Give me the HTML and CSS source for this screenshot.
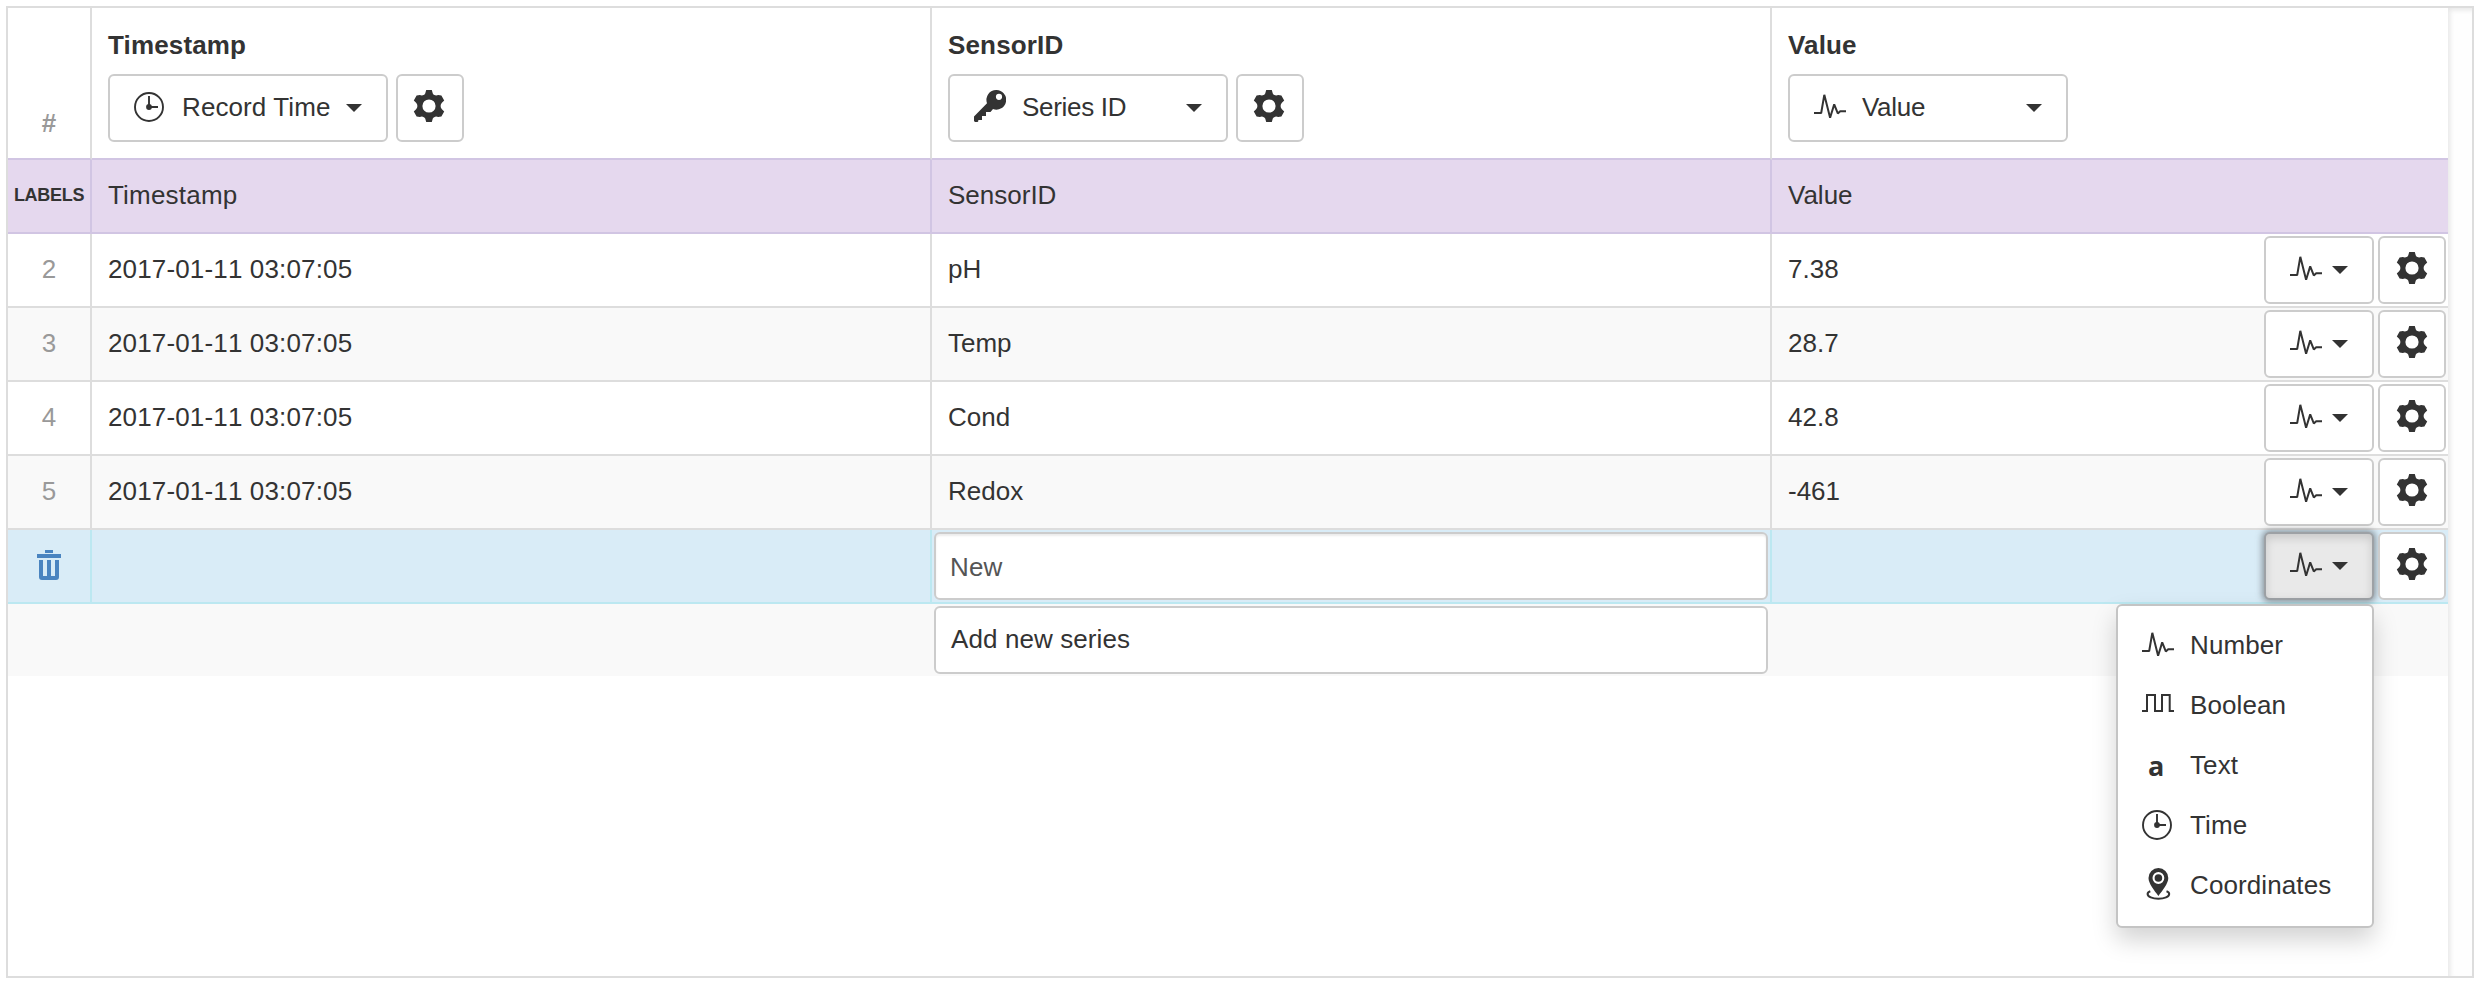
FILE: index.html
```html
<!DOCTYPE html>
<html lang="en">
<head>
<meta charset="utf-8">
<title>Series import</title>
<link rel="stylesheet" href="styles.css">
</head>
<body>
<svg class="sprite" aria-hidden="true">
  <symbol id="pulse" viewBox="0 0 32 32"><path d="M0 23H7.2L10.3 4.8L16.1 27.8L20.2 14.4L23.8 23.4L26.2 21.2H32" fill="none" stroke="currentColor" stroke-width="2" stroke-linejoin="bevel"/></symbol>
  <symbol id="bool" viewBox="0 0 32 32"><path d="M0 23H5V7H13V23H20V7H27.7V23H32" fill="none" stroke="currentColor" stroke-width="2"/></symbol>
  <symbol id="clock" viewBox="0 0 32 32"><circle cx="15" cy="17" r="14" fill="none" stroke="currentColor" stroke-width="1.9"/><path d="M15 6V17H24" fill="none" stroke="currentColor" stroke-width="1.9"/><circle cx="15" cy="17" r="2.9" fill="currentColor"/></symbol>
  <symbol id="gear" viewBox="0 0 32 32">
    <path fill="currentColor" fill-rule="evenodd" d="M13.2 0H18.8L19.8 3.4Q20.4 5 22.2 5.3Q23.8 5.6 25.2 4.9L28.4 5.6L31.2 10.4L28.9 12.7Q27.6 14.2 27.6 16T28.9 19.3L31.2 21.6L28.4 26.4L25.2 27.1Q23.8 26.4 22.2 26.7Q20.4 27 19.8 28.6L18.8 32H13.2L12.2 28.6Q11.6 27 9.8 26.7Q8.2 26.4 6.8 27.1L3.6 26.4L.8 21.6L3.1 19.3Q4.4 17.8 4.4 16T3.1 12.7L.8 10.4L3.6 5.6L6.8 4.9Q8.2 5.6 9.8 5.3Q11.6 5 12.2 3.4ZM16 9.4A6.6 6.6 0 1 0 16 22.6A6.6 6.6 0 1 0 16 9.4Z"/>
  </symbol>
  <symbol id="key" viewBox="0 0 32 32"><path fill="currentColor" fill-rule="evenodd" d="M22.3 0A9.8 9.8 0 1 1 19 19L16.5 22H12V26H8V30H4.3V31.2L3.5 32H1L0 31V26.5L13 13.2A9.8 9.8 0 0 1 22.3 0ZM25 3.7A3.1 3.1 0 1 0 25 9.9A3.1 3.1 0 1 0 25 3.7Z"/></symbol>
  <symbol id="pin" viewBox="0 0 32 32"><path fill="currentColor" fill-rule="evenodd" d="M16.4 0A9.9 9.9 0 0 1 26.3 10C26.3 15.5 20.5 22.5 16.4 28C12.3 22.5 6.5 15.5 6.5 10A9.9 9.9 0 0 1 16.4 0ZM16.4 4.1A5.9 5.9 0 1 0 16.4 15.9A5.9 5.9 0 1 0 16.4 4.1Z"/><circle cx="16.4" cy="10" r="3.8" fill="currentColor"/><path d="M8.3 23.3C6.3 24 5.6 25 5.6 26C5.6 28.8 10.4 30.7 16.4 30.7S27.2 28.8 27.2 26C27.2 25 26.5 24 24.5 23.3" fill="none" stroke="currentColor" stroke-width="2"/></symbol>
  <symbol id="trash" viewBox="0 0 24 30"><path fill="currentColor" d="M8 0H16V3H8ZM0 4H24V8H0ZM2 10H6V26H10V10H14V26H18V10H22V27Q22 30 19 30H5Q2 30 2 27Z"/></symbol>
</svg>

<div class="sheet">
  <div class="grid">
    <div class="row head">
      <div class="cell num">#</div>
      <div class="cell">
        <div class="title">Timestamp</div>
        <div class="tools">
          <button class="btn select"><svg class="icon"><use href="#clock"/></svg><span class="name">Record Time</span><i class="caret"></i></button>
          <button class="btn cog"><svg class="icon"><use href="#gear"/></svg></button>
        </div>
      </div>
      <div class="cell">
        <div class="title">SensorID</div>
        <div class="tools">
          <button class="btn select"><svg class="icon"><use href="#key"/></svg><span class="name tight">Series ID</span><i class="caret"></i></button>
          <button class="btn cog"><svg class="icon"><use href="#gear"/></svg></button>
        </div>
      </div>
      <div class="cell">
        <div class="title">Value</div>
        <div class="tools">
          <button class="btn select"><svg class="icon"><use href="#pulse"/></svg><span class="name tight">Value</span><i class="caret"></i></button>
        </div>
      </div>
    </div>

    <div class="row labels">
      <div class="cell num">LABELS</div>
      <div class="cell wide">Timestamp</div>
      <div class="cell">SensorID</div>
      <div class="cell">Value</div>
    </div>

    <div class="row">
      <div class="cell num">2</div>
      <div class="cell date">2017-01-11 03:07:05</div>
      <div class="cell">pH</div>
      <div class="cell last">7.38
        <div class="actions"><button class="btn type"><svg class="icon"><use href="#pulse"/></svg><i class="caret"></i></button><button class="btn cog"><svg class="icon"><use href="#gear"/></svg></button></div>
      </div>
    </div>
    <div class="row odd">
      <div class="cell num">3</div>
      <div class="cell date">2017-01-11 03:07:05</div>
      <div class="cell">Temp</div>
      <div class="cell last">28.7
        <div class="actions"><button class="btn type"><svg class="icon"><use href="#pulse"/></svg><i class="caret"></i></button><button class="btn cog"><svg class="icon"><use href="#gear"/></svg></button></div>
      </div>
    </div>
    <div class="row">
      <div class="cell num">4</div>
      <div class="cell date">2017-01-11 03:07:05</div>
      <div class="cell">Cond</div>
      <div class="cell last">42.8
        <div class="actions"><button class="btn type"><svg class="icon"><use href="#pulse"/></svg><i class="caret"></i></button><button class="btn cog"><svg class="icon"><use href="#gear"/></svg></button></div>
      </div>
    </div>
    <div class="row odd">
      <div class="cell num">5</div>
      <div class="cell date">2017-01-11 03:07:05</div>
      <div class="cell">Redox</div>
      <div class="cell last">-461
        <div class="actions"><button class="btn type"><svg class="icon"><use href="#pulse"/></svg><i class="caret"></i></button><button class="btn cog"><svg class="icon"><use href="#gear"/></svg></button></div>
      </div>
    </div>

    <div class="row active">
      <div class="cell num"><svg class="trash"><use href="#trash"/></svg></div>
      <div class="cell"></div>
      <div class="cell field-cell"><div class="field new">New</div></div>
      <div class="cell last">
        <div class="actions">
          <button class="btn type open"><svg class="icon"><use href="#pulse"/></svg><i class="caret"></i></button><button class="btn cog"><svg class="icon"><use href="#gear"/></svg></button>
          <div class="menu">
            <div class="item"><svg class="icon"><use href="#pulse"/></svg><span>Number</span></div>
            <div class="item"><svg class="icon"><use href="#bool"/></svg><span>Boolean</span></div>
            <div class="item"><b class="icon letter">a</b><span>Text</span></div>
            <div class="item"><svg class="icon"><use href="#clock"/></svg><span>Time</span></div>
            <div class="item"><svg class="icon"><use href="#pin"/></svg><span>Coordinates</span></div>
          </div>
        </div>
      </div>
    </div>

    <div class="row odd foot">
      <div class="cell num"></div>
      <div class="cell"></div>
      <div class="cell field-cell"><div class="field">Add new series</div></div>
      <div class="cell"></div>
    </div>
  </div>
  <div class="track"></div>
</div>
</body>
</html>
```

FILE: styles.css
```css
* { box-sizing: border-box; }
body {
  margin: 0;
  padding: 6px;
  background: #fff;
  color: #333;
  font: 26px/36px "Liberation Sans", Arial, sans-serif;
}
.sprite { display: none; }

.sheet {
  display: flex;
  width: 2468px;
  height: 972px;
  border: 2px solid #ddd;
}
.grid { width: 2440px; }
.track {
  flex: 1;
  background: #fefefe;
  box-shadow: inset 3px 3px 5px -1px #e6e6e6;
}

.row {
  display: grid;
  grid-template-columns: 84px 840px 840px 676px;
  height: 74px;
  --line: #ddd;
}
.cell {
  display: flex;
  align-items: center;
  padding: 0 2px 3px 16px;
  border-right: 2px solid var(--line);
  border-bottom: 2px solid var(--line);
}
.cell:last-child { border-right: 0; }
.num {
  justify-content: center;
  padding-left: 0;
  padding-right: 0;
  color: #999;
}
.date { font-kerning: none; letter-spacing: 0.15px; }
.wide { letter-spacing: 0.2px; }
.odd { background: #f9f9f9; }

.head { height: 152px; }
.head .cell {
  flex-direction: column;
  align-items: flex-start;
  padding-top: 19px;
  border-bottom-color: #d1c5e3;
}
.head .num {
  align-items: center;
  justify-content: flex-end;
  padding-bottom: 17px;
  font-weight: bold;
}
.title {
  height: 47px;
  font-weight: bold;
  letter-spacing: 0.15px;
}
.tools { display: flex; gap: 8px; }

.labels { background: #e5d8ee; --line: #d1c5e3; }
.labels .num {
  color: #333;
  font-size: 18px;
  font-weight: bold;
  letter-spacing: -0.3px;
}

.btn {
  display: flex;
  align-items: center;
  height: 68px;
  padding: 0;
  border: 2px solid #ccc;
  border-radius: 6px;
  background: #fff;
  color: #333;
  font: inherit;
}
.icon {
  display: block;
  flex: none;
  width: 32px;
  height: 32px;
}
.btn .icon { margin-bottom: 4px; }
.caret {
  border: 8px solid transparent;
  border-top-color: #333;
  border-bottom: 0;
}
.select { width: 280px; padding: 0 24px; }
.select .name {
  margin: -3px auto 0 16px;
  letter-spacing: 0.1px;
}
.select .tight { letter-spacing: -0.3px; }
.cog { width: 68px; justify-content: center; }
.head .cog { padding-right: 2px; }
.type { width: 110px; padding: 0 24px; gap: 10px; }
.open {
  border-color: #9da1a5;
  background: #e9e9e9;
  box-shadow: inset 0 4px 10px rgba(0, 0, 0, .14), 0 0 6px 2px rgba(90, 95, 100, .6);
}

.last { justify-content: space-between; padding-bottom: 3px; }
.actions {
  position: relative;
  display: flex;
  gap: 4px;
  margin: 2px 0 -1px auto;
}

.active { background: #d9ecf7; --line: #bce8f1; }
.trash {
  width: 24px;
  height: 30px;
  margin-top: 1px;
  color: #4a84c0;
}
.field-cell { align-items: flex-start; padding: 2px; }
.field {
  width: 834px;
  height: 68px;
  padding: 13px 15px;
  border: 2px solid #ccc;
  border-radius: 6px;
  background: #fff;
  letter-spacing: 0.1px;
}
.new {
  padding: 15px 14px;
  color: #555;
  box-shadow: inset 0 2px 2px rgba(0, 0, 0, .075);
}
.foot { --line: transparent; height: 72px; }

.menu {
  position: absolute;
  z-index: 2;
  top: 72px;
  right: 72px;
  width: 258px;
  height: 324px;
  padding: 10px 0;
  border: 2px solid #c4c4c4;
  border-radius: 6px;
  background: #fff;
  box-shadow: 0 12px 24px rgba(0, 0, 0, .175);
}
.item {
  display: flex;
  align-items: center;
  gap: 16px;
  height: 60px;
  padding: 0 24px 3px;
  letter-spacing: 0.1px;
}
.item .icon { margin-bottom: 1px; }
.letter {
  padding-left: 6px;
  font: bold 27px/36px "Open Sans", sans-serif;
}
```
